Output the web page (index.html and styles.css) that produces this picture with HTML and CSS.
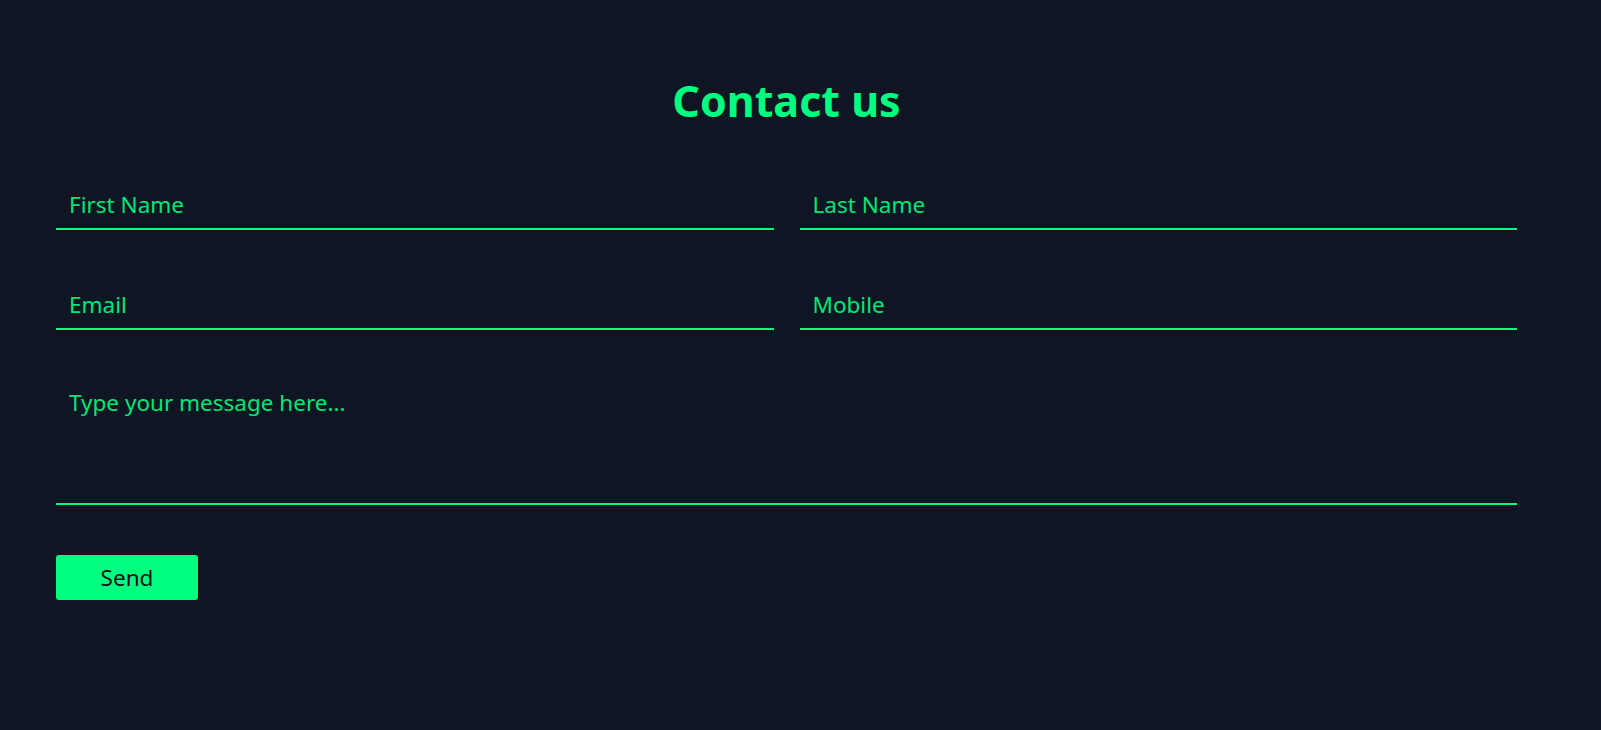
FILE: index.html
```html
<!DOCTYPE html>
<html lang="en">
<head>
<meta charset="utf-8">
<title>Contact us</title>
<link rel="stylesheet" href="styles.css">
</head>
<body>
<main class="page">
  <h1 class="title">Contact us</h1>
  <form class="form">
    <div class="row">
      <input class="field" type="text" placeholder="First Name">
      <input class="field" type="text" placeholder="Last Name">
    </div>
    <div class="row">
      <input class="field" type="email" placeholder="Email">
      <input class="field" type="text" placeholder="Mobile">
    </div>
    <textarea class="message" placeholder="Type your message here..."></textarea>
    <button class="send" type="button">Send</button>
  </form>
</main>
</body>
</html>
```

FILE: styles.css
```css
html, body {
  margin: 0;
  padding: 0;
  background: #0e1523;
  height: 100%;
}

body {
  font-family: "Noto Sans", "DejaVu Sans", sans-serif;
  color: #00ff7f;
}

.page {
  padding: 75px 84px 0 56px;
}

.title {
  margin: 0 0 53px;
  text-align: center;
  font-size: 43px;
  line-height: 52px;
  font-weight: 700;
  color: #00ff7f;
}

.form {
  display: flex;
  flex-direction: column;
  gap: 50px;
}

.row {
  display: grid;
  grid-template-columns: 1fr 1fr;
  gap: 26px;
}

.field,
.message {
  box-sizing: border-box;
  background: transparent;
  border: none;
  border-bottom: 2px solid #00ff7f;
  outline: none;
  font-family: inherit;
  font-size: 22.5px;
  line-height: 30px;
  color: #00ff7f;
  padding: 0 13px;
  width: 100%;
}

.field {
  height: 50px;
}

.message {
  height: 125px;
  padding-top: 8px;
  resize: none;
  display: block;
}

.field::placeholder,
.message::placeholder {
  color: #00e676;
  opacity: 1;
}

.send {
  align-self: flex-start;
  width: 142px;
  height: 45px;
  border: none;
  border-radius: 3px;
  background: #00ff7f;
  color: #0b0f17;
  font-family: inherit;
  font-size: 22.5px;
  line-height: 30px;
  padding: 0;
  cursor: pointer;
}
```
